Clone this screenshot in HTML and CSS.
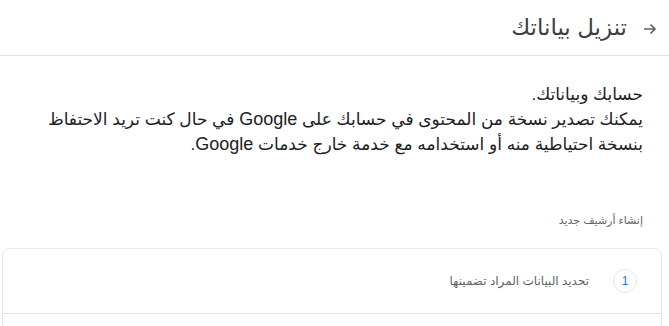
FILE: index.html
```html
<!DOCTYPE html>
<html lang="ar" dir="rtl">
<head>
  <meta charset="UTF-8"/>
  <title>تنزيل بياناتك</title>
  <link rel="stylesheet" href="styles.css">
</head>
<body>
  <div class="header">
    <svg class="back" width="14" height="14" viewBox="0 0 14 14">
      <path d="M1 7 H12 M7.5 2.5 L12 7 L7.5 11.5" fill="none" stroke="#5f6368" stroke-width="1.6"/>
    </svg>
    <h1>تنزيل بياناتك</h1>
  </div>

  <div class="content">
    <div class="intro">
      <div>حسابك وبياناتك.</div>
      <div>يمكنك تصدير نسخة من المحتوى في حسابك على <span class="latin">Google</span> في حال كنت تريد الاحتفاظ</div>
      <div>بنسخة احتياطية منه أو استخدامه مع خدمة خارج خدمات <span class="latin">Google</span>.</div>
    </div>

    <div class="label">إنشاء أرشيف جديد</div>
  </div>

  <div class="card">
    <div class="step">
      <span class="num">1</span>
      <span class="stepText">تحديد البيانات المراد تضمينها</span>
    </div>
    <div class="step"></div>
  </div>
</body>
</html>
```

FILE: styles.css
```css
html, body {
  margin: 0;
  background: #fff;
}
body {
  font-family: "Liberation Sans", "DejaVu Sans", sans-serif;
  color: #202124;
}
.header {
  height: 55px;
  border-bottom: 1px solid #e0e0e0;
  display: flex;
  align-items: center;
  padding-right: 12px;
}
.back {
  margin-left: 16px;
  margin-top: 2px;
}
h1 {
  margin: 0;
  font-size: 23px;
  font-weight: normal;
  color: #3c4043;
}
.content {
  padding: 26px 26px 0 20px;
}
.intro {
  font-size: 17px;
  line-height: 25px;
  white-space: nowrap;
}
.latin {
  font-size: 18px;
}
.label {
  margin-top: 55px;
  font-size: 11px;
  line-height: 16px;
  color: #5f6368;
}
.card {
  margin: 20px 7px 0 2px;
  border: 1px solid #e8e8e8;
  border-radius: 8px;
}
.step {
  height: 64px;
  display: flex;
  align-items: center;
  padding-right: 24px;
  border-bottom: 1px solid #e6e6e6;
}
.num {
  width: 22px;
  height: 22px;
  border: 1px solid #e3e6ea;
  border-radius: 50%;
  display: flex;
  align-items: center;
  justify-content: center;
  font-size: 12px;
  color: #1a73e8;
  margin-left: 24px;
}
.stepText {
  font-size: 12px;
  color: #5f6368;
}
```
